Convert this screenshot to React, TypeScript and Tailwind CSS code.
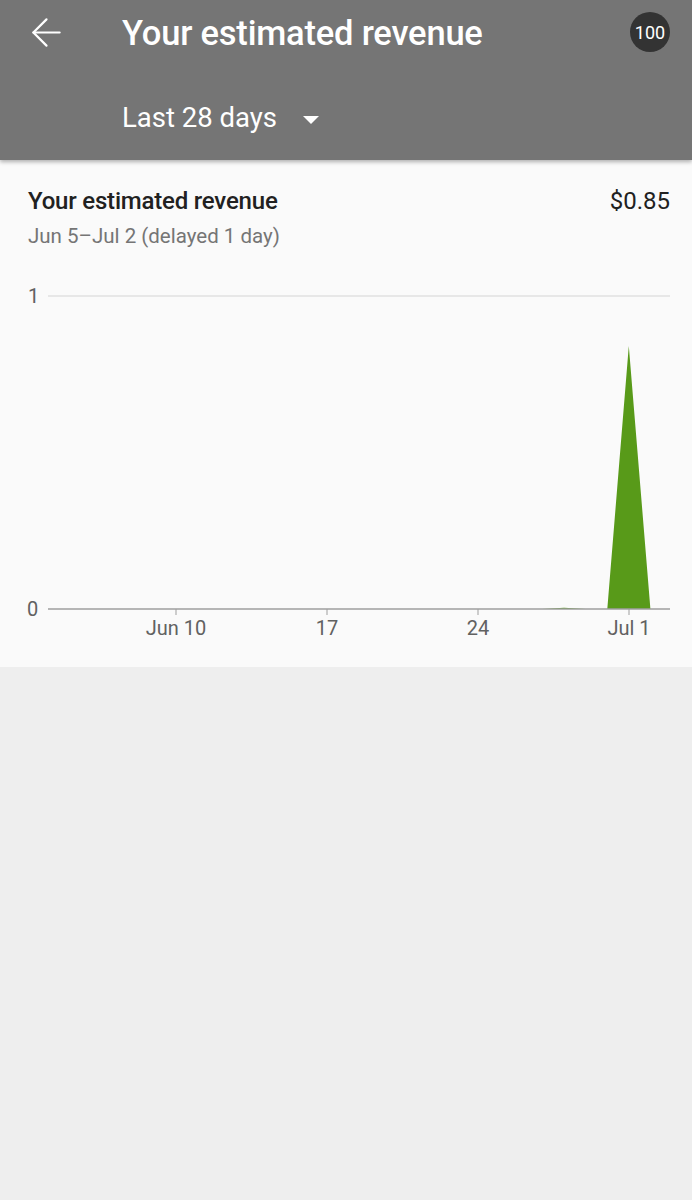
import { ArrowLeft } from "lucide-react";

// daily values Jun 5 .. Jul 2
const values = [
  0, 0, 0, 0, 0, 0, 0, 0, 0, 0, 0, 0, 0, 0, 0, 0, 0, 0, 0, 0, 0, 0, 0, 0.004, 0, 0, 0.84, 0,
];

const X0 = 68; // Jun 5
const DAY = 21.57;
const Y0 = 328; // baseline inside svg
const YSCALE = 313;

const Chart = () => {
  const pts = values.map((v, i) => `${(X0 + i * DAY).toFixed(1)},${(Y0 - v * YSCALE).toFixed(1)}`);
  const area = `M48,${Y0} L${pts.join(" L")} L670,${Y0} Z`;
  const ticks = [
    { x: 176, label: "Jun 10" },
    { x: 327, label: "17" },
    { x: 478, label: "24" },
    { x: 629, label: "Jul 1" },
  ];
  return (
    <svg width="692" height="373" className="block" style={{ fontFamily: "Roboto, sans-serif" }}>
      <line x1="48" y1="15" x2="670" y2="15" stroke="#e0e0e0" strokeWidth="1.5" />
      <text x="28" y="22" fontSize="20" fill="#616161">1</text>
      <path d={area} fill="#589a19" />
      <line x1="48" y1={Y0} x2="670" y2={Y0} stroke="#9e9e9e" strokeWidth="1.5" />
      <text x="27" y={Y0 + 7} fontSize="20" fill="#616161">0</text>
      {ticks.map((t) => (
        <g key={t.label}>
          <line x1={t.x} y1={Y0} x2={t.x} y2={Y0 + 6} stroke="#9e9e9e" strokeWidth="1" />
          <text x={t.x} y={Y0 + 26} fontSize="20" fill="#616161" textAnchor="middle">
            {t.label}
          </text>
        </g>
      ))}
    </svg>
  );
};

export default function App() {
  return (
    <div className="min-h-[1200px] bg-[#eeeeee] font-['Roboto',sans-serif]">
      <header className="relative z-10 h-[160px] bg-[#757575] text-white shadow-[0_2px_4px_rgba(0,0,0,0.3)]">
        <div className="flex h-[64px] items-center">
          <div className="flex w-[122px] justify-start pl-[24px]">
            <ArrowLeft size={45} strokeWidth={2.2} absoluteStrokeWidth />
          </div>
          <h1 className="mt-[4px] flex-1 text-[34.5px] font-medium tracking-[-0.2px]">Your estimated revenue</h1>
          <div className="mr-[22px] flex h-[40px] w-[40px] items-center justify-center rounded-full bg-[#333333] text-[18px]">
            100
          </div>
        </div>
        <div className="mt-[33px] flex items-center pl-[122px]">
          <span className="text-[27.5px]">Last 28 days</span>
          <svg width="18" height="10" className="ml-[25px] mt-[4px]" viewBox="0 0 18 10">
            <path d="M1 1 L17 1 L9 9 Z" fill="#fff" />
          </svg>
        </div>
      </header>
      <section className="h-[507px] bg-[#fafafa] pt-[23px]">
        <div className="flex items-baseline justify-between pl-[28px] pr-[22px]">
          <h2 className="text-[24px] font-medium tracking-[-0.2px] text-[#212121]">Your estimated revenue</h2>
          <span className="text-[24px] text-[#212121]">$0.85</span>
        </div>
        <p className="mt-[2px] pl-[28px] text-[20.5px] text-[#757575]">Jun 5–Jul 2 (delayed 1 day)</p>
        <div className="mt-[29px]">
          <Chart />
        </div>
      </section>
    </div>
  );
}
